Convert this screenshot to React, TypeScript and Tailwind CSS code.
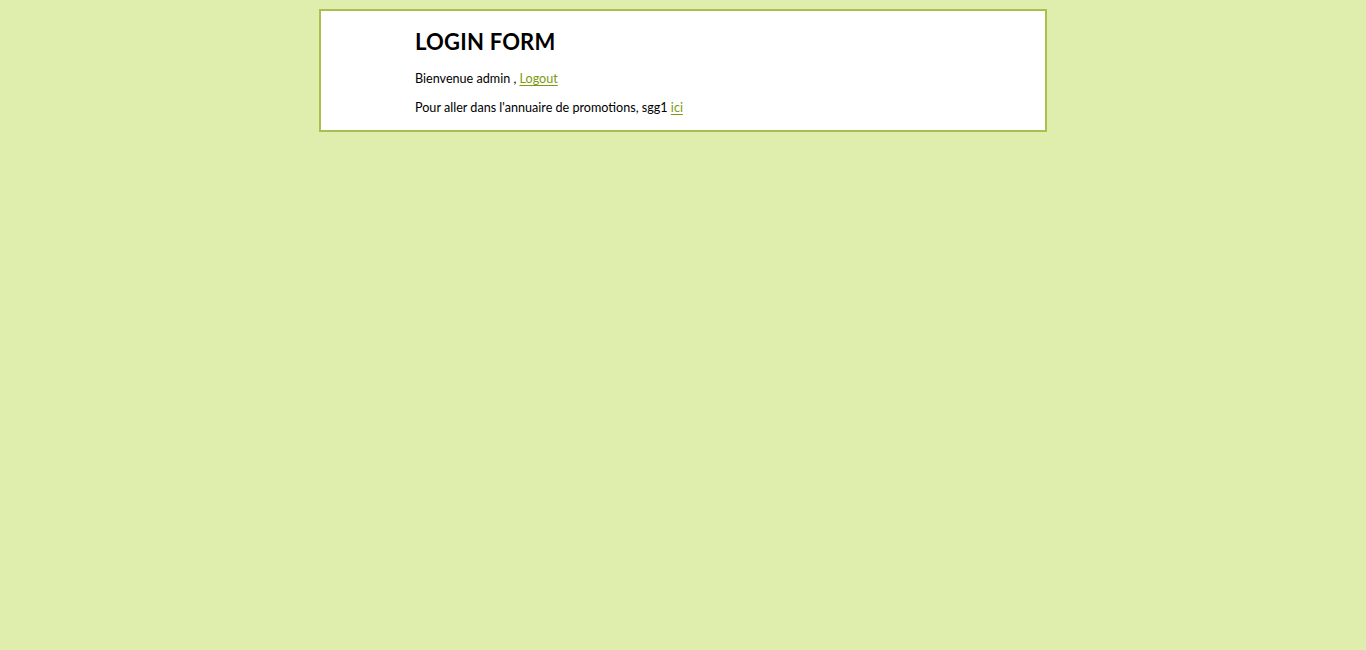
export default function App() {
  return (
    <div
      className="min-h-[650px] bg-[#dfedad] pt-[9px]"
      style={{ fontFamily: '"Lato", "DejaVu Sans", sans-serif' }}
    >
      <div className="mx-auto w-[728px] border-2 border-[#a8c04f] bg-white pl-[94px] pt-[15px] pb-[14px]">
        <h1 className="text-[22px] font-bold leading-[32px] text-black tracking-[0.2px]">LOGIN FORM</h1>
        <p className="mt-[13px] text-[12.6px] leading-[16px] text-black">
          Bienvenue admin ,{' '}
          <a href="#" className="text-[#7c9a0e] underline underline-offset-2">
            Logout
          </a>
        </p>
        <p className="mt-[13px] text-[12.6px] leading-[16px] text-black">
          Pour aller dans l'annuaire de promotions, sgg1{' '}
          <a href="#" className="text-[#7c9a0e] underline underline-offset-2">
            ici
          </a>
        </p>
      </div>
    </div>
  );
}
